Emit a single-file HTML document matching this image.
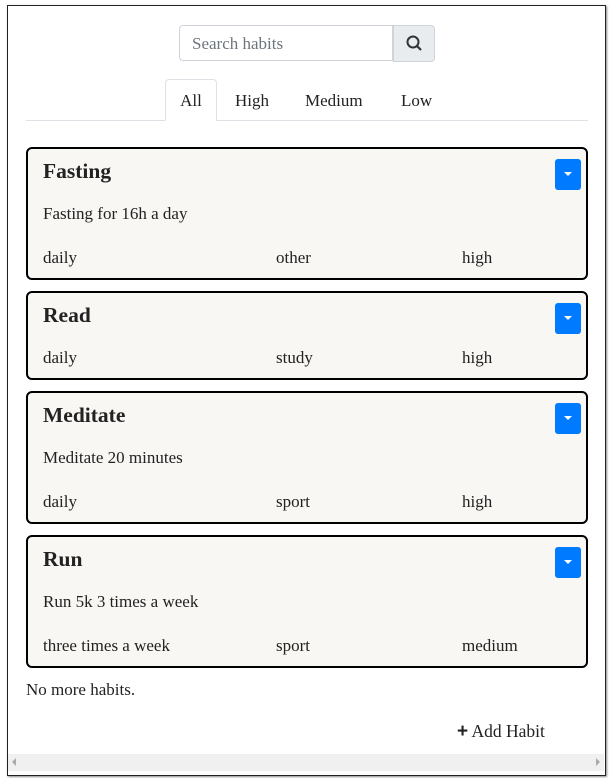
<!DOCTYPE html>
<html><head><style>
body{margin:0;width:612px;height:778px;background:#fff;font-family:"Liberation Serif",serif;color:#222;position:relative;overflow:hidden}
.frame{position:absolute;left:7px;top:5px;width:597px;height:769px;border:1px solid #222;box-shadow:1px 1px 2px #888;background:#fff}
.abs{position:absolute}
.search{left:179px;top:25px;width:214px;height:36px;border:1px solid #ced4da;border-radius:4px 0 0 4px;box-sizing:border-box;font-size:17px;color:#6c757d;padding:8px 12px}
.sbtn{left:393px;top:25px;width:42px;height:37px;background:#e9ecef;border:1px solid #ced4da;border-radius:0 4px 4px 0;box-sizing:border-box}
.tabline{left:26px;top:120px;width:562px;height:1px;background:#dee2e6}
.tab{top:80px;height:41px;font-size:17px;line-height:41px;color:#222}
.tabA{left:165px;width:52px;border:1px solid #dee2e6;border-bottom:1px solid #fff;border-radius:4px 4px 0 0;box-sizing:border-box;text-align:center;background:#fff;top:79px;height:42px;line-height:42px}
.card{left:26px;width:562px;border:2px solid #000;border-radius:6px;box-sizing:border-box;background:#f9f7f4}
.card h3{position:absolute;left:15px;top:10px;margin:0;font-size:21.5px;font-weight:bold;color:#222}
.card .d{position:absolute;left:15px;font-size:17px}
.btn{position:absolute;right:5px;top:10px;width:26px;height:31px;background:#007bff;border-radius:3px}
.btn:after{content:"";position:absolute;left:9px;top:13px;border-left:4px solid transparent;border-right:4px solid transparent;border-top:4px solid #fff}
.r{position:absolute;font-size:17px}
</style></head><body>
<div class="frame"></div>
<div class="abs search">Search habits</div>
<div class="abs sbtn"><svg width="40" height="35" viewBox="0 0 40 35"><circle cx="19" cy="16" r="5.5" fill="none" stroke="#333" stroke-width="2"/><line x1="23" y1="20" x2="27" y2="24" stroke="#333" stroke-width="2.2"/></svg></div>
<div class="abs tabline"></div>
<div class="abs tab tabA">All</div>
<div class="abs tab" style="left:235px">High</div>
<div class="abs tab" style="left:305px">Medium</div>
<div class="abs tab" style="left:401px">Low</div>

<div class="abs card" style="top:147px;height:133px"><h3>Fasting</h3><div class="btn"></div>
<div class="d" style="top:55px">Fasting for 16h a day</div>
<div class="r" style="left:15px;top:99px">daily</div><div class="r" style="left:248px;top:99px">other</div><div class="r" style="left:434px;top:99px">high</div></div>

<div class="abs card" style="top:291px;height:89px"><h3>Read</h3><div class="btn"></div>
<div class="r" style="left:15px;top:55px">daily</div><div class="r" style="left:248px;top:55px">study</div><div class="r" style="left:434px;top:55px">high</div></div>

<div class="abs card" style="top:391px;height:133px"><h3>Meditate</h3><div class="btn"></div>
<div class="d" style="top:55px">Meditate 20 minutes</div>
<div class="r" style="left:15px;top:99px">daily</div><div class="r" style="left:248px;top:99px">sport</div><div class="r" style="left:434px;top:99px">high</div></div>

<div class="abs card" style="top:535px;height:133px"><h3>Run</h3><div class="btn"></div>
<div class="d" style="top:55px">Run 5k 3 times a week</div>
<div class="r" style="left:15px;top:99px">three times a week</div><div class="r" style="left:248px;top:99px">sport</div><div class="r" style="left:434px;top:99px">medium</div></div>

<div class="abs" style="left:26px;top:680px;font-size:17px">No more habits.</div>
<div class="abs" style="left:457px;top:721px;font-size:17.5px"><b style="font-family:'Liberation Sans',sans-serif;font-size:19px">+</b> Add Habit</div>
<div class="abs" style="left:8px;top:754px;width:596px;height:17px;background:#f0f0f0"></div>
<div class="abs" style="left:12px;top:758px;border-right:4px solid #aaa;border-top:4px solid transparent;border-bottom:4px solid transparent"></div>
<div class="abs" style="left:596px;top:758px;border-left:4px solid #aaa;border-top:4px solid transparent;border-bottom:4px solid transparent"></div>
</body></html>
